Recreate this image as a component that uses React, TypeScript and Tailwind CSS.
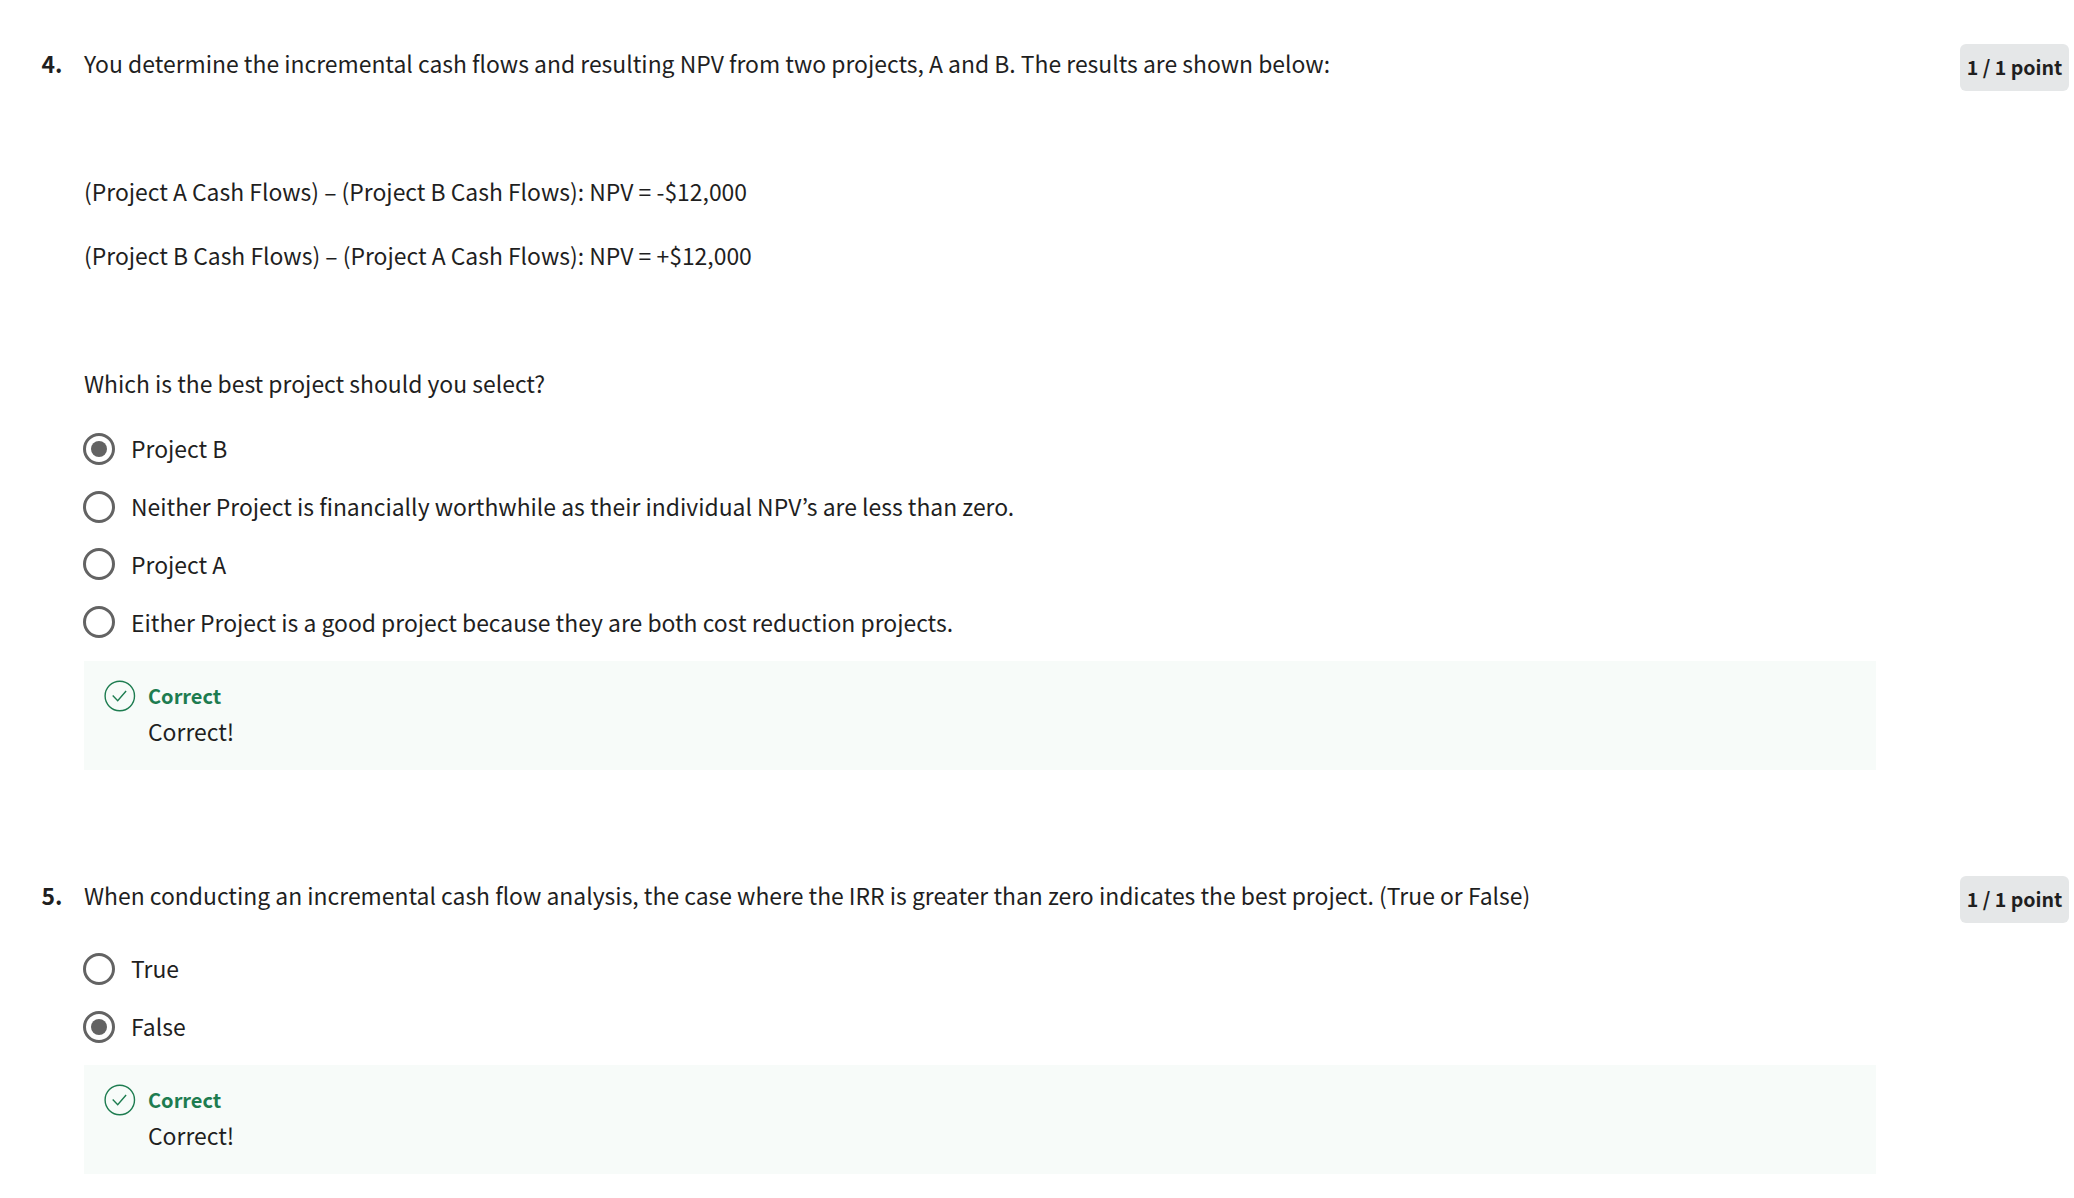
import React from 'react';

function Radio({ checked = false, label }: { checked?: boolean; label: string }) {
  return (
    <div role="radio" aria-checked={checked} className="-ml-px flex h-[57.75px] items-center">
      <span className="flex size-8 shrink-0 items-center justify-center rounded-full border-[3px] border-[#636363]">
        {checked && <span className="size-4 rounded-full bg-[#636363]" />}
      </span>
      <span className="ml-4 pb-px">{label}</span>
    </div>
  );
}

function Feedback() {
  return (
    <div className="flex h-[109px] w-[1792px] bg-[#f7fbf9] pl-5 pt-[17px]">
      <svg viewBox="0 0 32 32" fill="none" stroke="#1d7c50" className="mt-0.5 size-8 shrink-0" strokeWidth="1.4">
        <circle cx="15.8" cy="16" r="14.7" />
        <path d="M8.7 15.6l5 5.2L22.1 11" />
      </svg>
      <div className="ml-3">
        <p className="text-[20px] leading-9 font-bold text-[#1d7c50]">Correct</p>
        <p className="leading-[34px]">Correct!</p>
      </div>
    </div>
  );
}

function Points() {
  return (
    <span className="flex h-[46.5px] w-[109px] items-center justify-center rounded-md bg-[#e5e7e8] text-[19.6px] font-bold whitespace-nowrap">1 / 1 point</span>
  );
}

export default function App() {
  return (
    <main className="h-[1198px] w-[2074px] overflow-hidden bg-white pl-[41.5px] pt-[32px] font-['Noto_Sans_CJK_KR',sans-serif] text-[22.92px] leading-8 text-[#1f1f1f]">
      <section className="flex h-[832px]">
        <div className="w-[42.5px] pt-[15px] font-bold">4.</div>
        <div className="w-[1792px] pt-[15px]">
          <p>You determine the incremental cash flows and resulting NPV from two projects, A and B. The results are shown below:</p>
          <p className="mt-24">(Project A Cash Flows) – (Project B Cash Flows): NPV = -$12,000</p>
          <p className="mt-8">(Project B Cash Flows) – (Project A Cash Flows): NPV = +$12,000</p>
          <p className="mt-24">Which is the best project should you select?</p>
          <div className="mt-[21px] mb-[10px]">
            <Radio checked label="Project B" />
            <Radio label="Neither Project is financially worthwhile as their individual NPV’s are less than zero." />
            <Radio label="Project A" />
            <Radio label="Either Project is a good project because they are both cost reduction projects." />
          </div>
          <Feedback />
        </div>
        <div className="ml-[84px] pt-3"><Points /></div>
      </section>
      <section className="flex">
        <div className="w-[42.5px] pt-[15px] font-bold">5.</div>
        <div className="w-[1792px] pt-[15px]">
          <p>When conducting an incremental cash flow analysis, the case where the IRR is greater than zero indicates the best project. (True or False)</p>
          <div className="mt-[29px] mb-[9.5px]">
            <Radio label="True" />
            <Radio checked label="False" />
          </div>
          <Feedback />
        </div>
        <div className="ml-[84px] pt-3"><Points /></div>
      </section>
    </main>
  );
}
